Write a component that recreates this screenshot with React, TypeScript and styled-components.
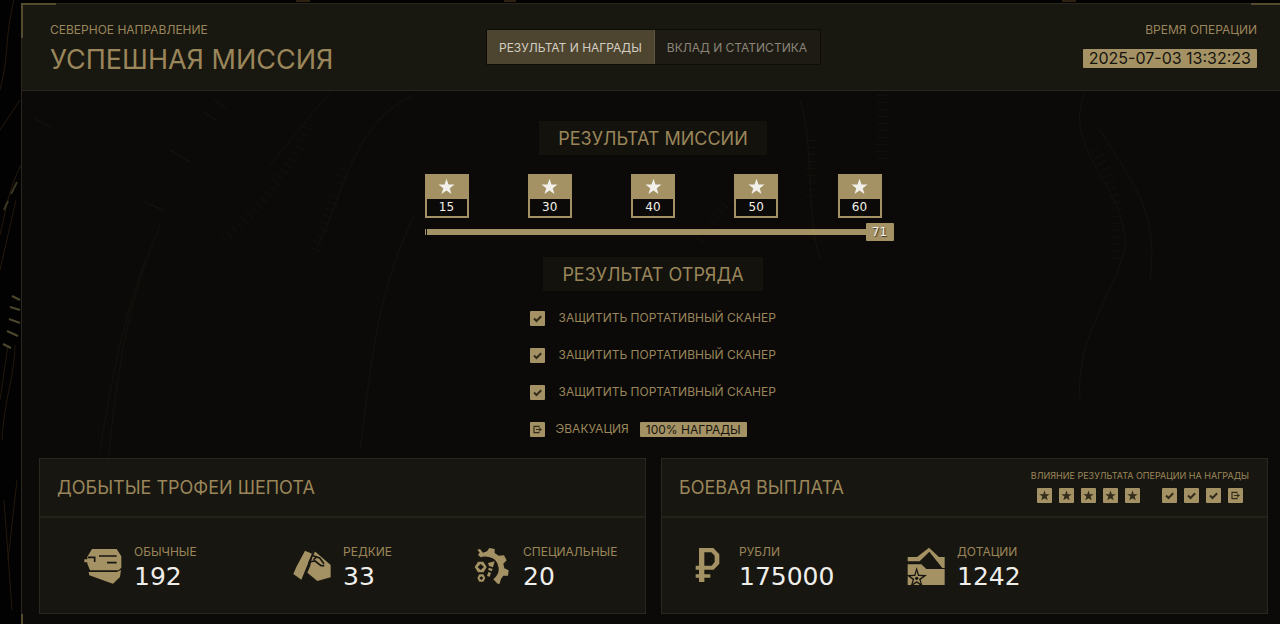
import React, { useState } from "react";
import styled, { createGlobalStyle, css } from "styled-components";

const gold = "#a49265";
const goldText = "#9a865a";
const ink = "#15130d";
const line = "#2a271e";
const wideDigits = '"DejaVu Sans", "Liberation Sans", sans-serif';

const GlobalStyle = createGlobalStyle`
  *, *::before, *::after { box-sizing: border-box; }
  body {
    margin: 0;
    background: #020202;
    color: ${goldText};
    font-family: Inter, "Liberation Sans", sans-serif;
    text-transform: uppercase;
  }
  h1, h2, p, ul, dl, dd { margin: 0; padding: 0; font-weight: 400; }
  ul { list-style: none; }
`;

const Page = styled.div`
  position: relative;
  min-height: 100vh;
  padding: 3px 0 0 21px;
  overflow: hidden;
`;

const Backdrop = styled.svg`
  position: absolute;
  inset: 0;
  width: 100%;
  height: 100%;
  pointer-events: none;
`;

const Frame = styled.main`
  position: relative;
  min-height: calc(100vh - 3px);
  border-top: 1px solid ${line};
  border-left: 1px solid ${line};
  background: rgba(12, 11, 9, 0.88);
`;

const Corner = styled.span<{ $at: "topLeft" | "topRight" | "bottomLeft" }>`
  position: absolute;
  width: 35px;
  height: 35px;
  border: 0 solid #554c2f;
  ${({ $at }) =>
    $at === "topLeft" &&
    css`
      top: -1px;
      left: -1px;
      border-width: 2px 0 0 2px;
    `}
  ${({ $at }) =>
    $at === "topRight" &&
    css`
      top: -1px;
      right: 0;
      width: 29px;
      border-top-width: 2px;
    `}
  ${({ $at }) =>
    $at === "bottomLeft" &&
    css`
      bottom: 0;
      left: -1px;
      height: 10px;
      border-left-width: 2px;
    `}
`;

const Header = styled.header`
  display: grid;
  grid-template-columns: 1fr auto 1fr;
  align-items: start;
  height: 87px;
  padding: 18px 23px 0 28px;
  border-bottom: 1px solid ${line};
  background: rgba(28, 26, 19, 0.8);
`;

const Kicker = styled.p`
  font-size: 12px;
  line-height: 16px;
`;

const Title = styled.h1`
  font-size: 27px;
  line-height: 44px;
`;

const Tabs = styled.nav`
  display: flex;
  margin-top: 7px;
  border: 1px solid #0e0d09;
`;

const Tab = styled.button<{ $active: boolean }>`
  height: 34px;
  padding: 1px 12px 0;
  border: 0;
  border-right: 1px solid ${({ $active }) => ($active ? "#5d543c" : "#1e1b14")};
  background: ${({ $active }) => ($active ? "#4e4530" : "#1e1b14")};
  color: ${({ $active }) => ($active ? "#d2cec2" : "#8a8578")};
  font: 400 12px/16px Inter, "Liberation Sans", sans-serif;
  text-transform: uppercase;
  cursor: pointer;
`;

const Operation = styled.div`
  display: flex;
  flex-direction: column;
  align-items: flex-end;
  gap: 11px;
`;

const Tag = styled.span<{ $size: number }>`
  padding: 0 6px;
  border-radius: 1px;
  background: ${gold};
  color: ${ink};
  font-size: ${({ $size }) => $size}px;
  line-height: ${({ $size }) => $size + 3}px;
`;

const Results = styled.section`
  display: flex;
  flex-direction: column;
  align-items: center;
  padding: 30px 0 0 4px;
`;

const SectionTitle = styled.h2`
  padding: 2px 19px 0;
  background: #13120d;
  font-size: 18px;
  line-height: 32px;
`;

const Progress = styled.div`
  width: 457px;
  margin: 19px 0 16px;
`;

const Milestones = styled.ul`
  display: flex;
  justify-content: space-between;
`;

const Milestone = styled.li`
  display: flex;
  flex-direction: column;
  align-items: center;
  width: 44px;
  height: 44px;
  padding: 4px 2px 2px;
  background: ${gold};
  color: #f2f0ea;
`;

const Score = styled.span`
  width: 100%;
  margin-top: 4px;
  background: #0b0a08;
  font: 400 12px/17px ${wideDigits};
  text-align: center;
`;

const Track = styled.div`
  display: flex;
  align-items: center;
  margin: 5px -12px 0 0;
`;

const Bar = styled.div`
  flex: 1;
  height: 6px;
  border-left: 1px solid ${gold};
  background: linear-gradient(90deg, #0b0a08 1px, ${gold} 1px);
`;

const Total = styled.output`
  width: 28px;
  border-radius: 1px;
  background: ${gold};
  color: #f2f0ea;
  font: 400 12px/18px ${wideDigits};
  text-align: center;
  text-shadow: 1px 1px 1px #3a3220;
`;

const Objectives = styled.ul`
  display: flex;
  flex-direction: column;
  gap: 17px;
  width: 247px;
  margin-top: 17px;
  font-size: 12px;
  line-height: 20px;
`;

const Objective = styled.li`
  display: flex;
  align-items: center;
  gap: 11px;
  white-space: nowrap;
`;

const TickLabel = styled.label`
  display: flex;
  align-items: center;
  gap: 14px;
`;

const Chip = styled.span`
  display: grid;
  place-items: center;
  flex: none;
  width: 15px;
  height: 15px;
  border-radius: 1px;
  background: ${gold};
  color: #342d1c;
  > * { grid-area: 1 / 1; }
`;

const TickInput = styled.input`
  appearance: none;
  width: 15px;
  height: 15px;
  margin: 0;
`;

const Panels = styled.div`
  display: grid;
  grid-template-columns: 1fr 1fr;
  gap: 15px;
  padding: 19px 12px 10px 17px;
`;

const Panel = styled.section`
  border: 1px solid ${line};
  background: #181610;
`;

const PanelHead = styled.header`
  display: flex;
  align-items: center;
  justify-content: space-between;
  height: 59px;
  padding: 0 18px 0 17px;
  border-bottom: 2px solid #25221a;
`;

const PanelTitle = styled.h2`
  font-size: 18px;
  line-height: 24px;
`;

const Impact = styled.div`
  display: flex;
  flex-direction: column;
  align-items: center;
  gap: 6px;
  padding-bottom: 2px;
  font-size: 9px;
  line-height: 12px;
`;

const ChipRow = styled.div`
  display: flex;
  gap: 22px;
  color: #4a4029;
`;

const ChipGroup = styled.div`
  display: flex;
  gap: 7px;
`;

const Stats = styled.dl<{ $columns: string }>`
  display: grid;
  grid-template-columns: ${({ $columns }) => $columns};
  height: 95px;
  padding: 24px 0 0;
`;

const Stat = styled.div<{ $gap: number }>`
  display: flex;
  gap: ${({ $gap }) => $gap}px;
`;

const StatIcon = styled.svg`
  flex: none;
  height: 38px;
  margin-top: 5px;
  fill: ${gold};
`;

const StatName = styled.dt`
  font-size: 12px;
  line-height: 20px;
`;

const StatValue = styled.dd`
  color: #efeeea;
  font: 400 25px/29px ${wideDigits};
`;

const starPoints = "12,1 14.8,9 23.4,9.2 16.6,14.4 19,22.6 12,17.8 5,22.6 7.4,14.4 0.6,9.2 9.2,9";

const Star = ({ size }: { size: number }) => (
  <svg width={size} height={size} viewBox="0 0 24 24" fill="currentColor" aria-hidden="true">
    <polygon points={starPoints} />
  </svg>
);

const Check = () => (
  <svg width="9" height="9" viewBox="0 0 9 9" fill="none" stroke="currentColor" strokeWidth="2" aria-hidden="true">
    <path d="M1 4.5 3.5 7 8.2 2.2" />
  </svg>
);

const Exit = () => (
  <svg width="9" height="9" viewBox="0 0 9 9" fill="none" stroke="currentColor" strokeWidth="1.2" aria-hidden="true">
    <path d="M6 2.6V1.4H1v6.2h5V6.4M3 4.5h4" />
    <path d="M6.4 2.6 9 4.5 6.4 6.4z" fill="currentColor" stroke="none" />
  </svg>
);

const Helmet = () => (
  <StatIcon width="38" viewBox="0 0 114 114" aria-hidden="true">
    <path d="M24 6H98L112 28V62L104 70H18L10 50V46H1V37H10V29Z" />
    <path d="M14 75H98L111 69L108 90L87 110L78 107L16 85Z" />
    <path d="M12 31H32V45M45 27H98M69 47H98" fill="none" stroke="#181610" strokeWidth="5" />
  </StatIcon>
);

const Plates = () => (
  <StatIcon width="38" viewBox="0 0 114 114" aria-hidden="true">
    <path d="M36 11L57 20L25 98L1 81L10 60L26 30Z" />
    <path d="M60 14L68 15L113 54V91L73 102L43 77L52 56Z" />
    <path d="M63 14L47 50M56 25L80 33L93 50M48 45L66 42L84 56H94M61 38L70 31" fill="none" stroke="#181610" strokeWidth="5" />
  </StatIcon>
);

const Gear = () => (
  <StatIcon width="36" viewBox="0 0 108 114" aria-hidden="true">
    <path d="M10 8L18 6L27 17L39 13L46 3L62 6V18L74 26L90 25L98 40L88 50L91 64L104 70L102 86L88 86L81 96L76 112L69 109L58 97L64 91Q75 80 74 62Q70 34 45 30Q30 27 20 31L12 24L17 17Z" />
    <path fillRule="evenodd" d="M12 44H28L38 60L29 76H12L2 60ZM20 51L11 60L20 69L30 60Z" />
    <path fillRule="evenodd" d="M16 82H28L34 93L28 104H16L10 93ZM22 88L16 93L22 99L28 93Z" />
    <path d="M42 48L62 43L57 61L45 57ZM44 62L56 66L53 73L43 69ZM43 75L51 78L47 89L39 87Z" />
  </StatIcon>
);

const Ruble = () => (
  <StatIcon width="25" viewBox="0 0 75 114" aria-hidden="true">
    <path
      fillRule="evenodd"
      d="M12 3H55L73 22V50L56 68H28V82H46V92H28V105H12V92H2V82H12V68H2V56H12ZM28 16V56H50L59 45V26L49 16Z"
    />
  </StatIcon>
);

const Subsidy = () => (
  <StatIcon width="38" viewBox="0 0 114 114" aria-hidden="true">
    <path d="M2 30H30L66 2L96 30H113V63H106L67 14L38 43H2Z" />
    <path d="M2 52H43L58 66H113V114H2Z" />
    <polygon points="29,60 36,83 60,84 41,98 48,121 29,107 10,121 17,98 -2,84 22,83" fill="#181610" />
    <polygon points="29,73 33,87 48,88 36,96 41,110 29,102 17,110 22,96 10,88 25,87" />
    <circle cx="29" cy="94" r="5" fill="#181610" />
  </StatIcon>
);

const milestones = [15, 30, 40, 50, 60];
const objectives = [1, 2, 3];
const trophies = [
  { name: "Обычные", value: "192", icon: <Helmet />, gap: 12 },
  { name: "Редкие", value: "33", icon: <Plates />, gap: 12 },
  { name: "Специальные", value: "20", icon: <Gear />, gap: 13 },
];
const payouts = [
  { name: "Рубли", value: "175000", icon: <Ruble />, gap: 19 },
  { name: "Дотации", value: "1242", icon: <Subsidy />, gap: 12 },
];
const tabs = ["Результат и награды", "Вклад и статистика"];

const StatList = ({ items, columns }: { items: typeof trophies; columns: string }) => (
  <Stats $columns={columns}>
    <span />
    {items.map((item) => (
      <Stat key={item.name} $gap={item.gap}>
        {item.icon}
        <div>
          <StatName>{item.name}</StatName>
          <StatValue>{item.value}</StatValue>
        </div>
      </Stat>
    ))}
  </Stats>
);

const Roots = () => (
  <Backdrop viewBox="0 0 1280 624" preserveAspectRatio="xMidYMid slice" fill="none" aria-hidden="true">
    <g stroke="#24190c" strokeWidth="1">
      <path d="M14 0C4 40 10 50 0 90M21 165C8 190 6 210 0 235M16 200 0 270M15 345C14 380 4 400 2 440M0 130 20 100" />
      <path d="M8 345 0 400M17 480 8 560M4 500 12 610" />
    </g>
    <g stroke="#4c472c" strokeWidth="2">
      <path d="M12 296l8 4M10 307l10 3M9 319l11 4M7 331l11 5M3 344l8 4" />
      <path d="M17 182l-6 12M8 201l-4 9" stroke="#3a3720" />
    </g>
    <g stroke="#4a4128" strokeWidth="1">
      <path d="M160 225C125 310 118 370 108 460M145 260C120 330 110 390 100 450" />
      <path d="M415 95C350 120 340 210 315 250M415 215C375 290 370 380 360 450" />
      <path d="M213 100l14 8M203 112l13 8M170 150l20 12M145 202l20 9M35 119l16 8" stroke="#5c5233" />
      <path d="M800 100C815 150 805 210 820 260M1085 92C1060 150 1130 190 1125 250C1110 300 1075 340 1080 400" />
      <path d="M330 92 270 165M1100 130C1130 180 1160 210 1150 280" />
    </g>
    <g stroke="#3a331f" strokeWidth="10" strokeDasharray="1 6">
      <path d="M308 128C290 170 260 210 222 240M812 140L810 200M882 95V165M1095 150C1120 190 1120 230 1115 260M345 170 315 250M730 200L700 240" />
    </g>
    <path d="M296 1h14M504 1h12M1062 1h14" stroke="#2c220f" strokeWidth="2" />
  </Backdrop>
);

export default function App() {
  const [active, setActive] = useState(0);
  return (
    <>
      <GlobalStyle />
      <Page>
        <Roots />
        <Frame>
          <Corner $at="topLeft" />
          <Corner $at="topRight" />
          <Corner $at="bottomLeft" />
          <Header>
            <div>
              <Kicker>Северное направление</Kicker>
              <Title>Успешная миссия</Title>
            </div>
            <Tabs>
              {tabs.map((label, index) => (
                <Tab key={label} type="button" $active={index === active} onClick={() => setActive(index)}>
                  {label}
                </Tab>
              ))}
            </Tabs>
            <Operation>
              <Kicker>Время операции</Kicker>
              <Tag $size={16}>2025-07-03 13:32:23</Tag>
            </Operation>
          </Header>

          <Results>
            <SectionTitle>Результат миссии</SectionTitle>
            <Progress>
              <Milestones>
                {milestones.map((score) => (
                  <Milestone key={score}>
                    <Star size={17} />
                    <Score>{score}</Score>
                  </Milestone>
                ))}
              </Milestones>
              <Track>
                <Bar />
                <Total>71</Total>
              </Track>
            </Progress>

            <SectionTitle>Результат отряда</SectionTitle>
            <Objectives>
              {objectives.map((id) => (
                <Objective key={id}>
                  <TickLabel>
                    <Chip>
                      <TickInput type="checkbox" checked readOnly />
                      <Check />
                    </Chip>
                    Защитить портативный сканер
                  </TickLabel>
                </Objective>
              ))}
              <Objective>
                <Chip>
                  <Exit />
                </Chip>
                <span>Эвакуация</span>
                <Tag $size={12}>100% награды</Tag>
              </Objective>
            </Objectives>
          </Results>

          <Panels>
            <Panel>
              <PanelHead>
                <PanelTitle>Добытые трофеи Шепота</PanelTitle>
              </PanelHead>
              <StatList items={trophies} columns="44fr 209fr 181fr 171fr" />
            </Panel>
            <Panel>
              <PanelHead>
                <PanelTitle>Боевая выплата</PanelTitle>
                <Impact>
                  <p>Влияние результата операции на награды</p>
                  <ChipRow>
                    <ChipGroup>
                      {milestones.map((score) => (
                        <Chip key={score}>
                          <Star size={11} />
                        </Chip>
                      ))}
                    </ChipGroup>
                    <ChipGroup>
                      {objectives.map((id) => (
                        <Chip key={id}>
                          <Check />
                        </Chip>
                      ))}
                      <Chip>
                        <Exit />
                      </Chip>
                    </ChipGroup>
                  </ChipRow>
                </Impact>
              </PanelHead>
              <StatList items={payouts} columns="33fr 212fr 360fr" />
            </Panel>
          </Panels>
        </Frame>
      </Page>
    </>
  );
}
